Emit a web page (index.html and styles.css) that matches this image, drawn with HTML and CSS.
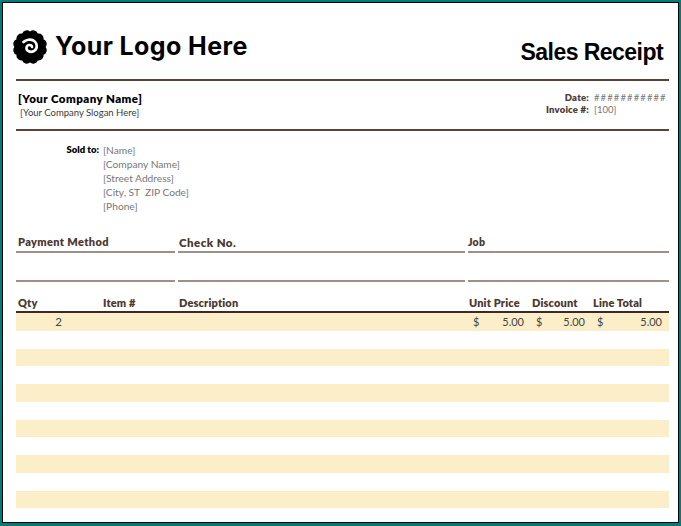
FILE: index.html
```html
<!DOCTYPE html>
<html lang="en">
<head>
<meta charset="utf-8">
<title>Sales Receipt</title>
<link rel="stylesheet" href="styles.css">
</head>
<body>
<main class="frame">
  <header class="top">
    <div class="logo">
      <svg class="mark" viewBox="0 0 36 36" aria-hidden="true">
        <path fill="#000" d="M33.600 18A5 5 0 0 1 31.500 25.800 5 5 0 0 1 25.800 31.500 5 5 0 0 1 18 33.600 5 5 0 0 1 10.200 31.500 5 5 0 0 1 4.500 25.800 5 5 0 0 1 2.400 18 5 5 0 0 1 4.500 10.200 5 5 0 0 1 10.200 4.500 5 5 0 0 1 18 2.400 5 5 0 0 1 25.800 4.500 5 5 0 0 1 31.500 10.200 5 5 0 0 1 33.600 18Z"/>
        <path fill="none" stroke="#fff" stroke-width="2.600" stroke-linecap="round" d="M20 18c-.2-2.500-4.800-2.800-5.500.5-.6 3.400 3.800 5.500 7.500 3.500 4-2.500 3.500-8-.5-10.500-3-1.500-7.500-1-10 1.500"/>
      </svg>
      <span class="logo-text">Your Logo Here</span>
    </div>
    <h1 class="title">Sales Receipt</h1>
  </header>

  <section class="company">
    <div>
      <div class="co-name">[Your Company Name]</div>
      <div class="co-slogan">[Your Company Slogan Here]</div>
    </div>
    <dl class="meta">
      <dt>Date:</dt><dd class="hash">###########</dd>
      <dt>Invoice #:</dt><dd>[100]</dd>
    </dl>
  </section>

  <section class="sold">
    <div class="sold-label">Sold to:</div>
    <div class="sold-lines">
      <div>[Name]</div>
      <div>[Company Name]</div>
      <div>[Street Address]</div>
      <div>[City, ST&nbsp; ZIP Code]</div>
      <div>[Phone]</div>
    </div>
  </section>

  <section class="fields">
    <div class="field pay">Payment Method</div>
    <div class="field check">Check No.</div>
    <div class="field job">Job</div>
    <div class="field"></div>
    <div class="field"></div>
    <div class="field"></div>
  </section>

  <section class="items">
    <div class="row head">
      <div>Qty</div><div>Item #</div><div>Description</div>
      <div>Unit Price</div><div>Discount</div><div>Line Total</div>
    </div>
    <div class="row band">
      <div class="qty">2</div><div></div><div></div>
      <div class="money"><span>$</span><span>5.00</span></div>
      <div class="money"><span>$</span><span>5.00</span></div>
      <div class="money"><span>$</span><span>5.00</span></div>
    </div>
    <div class="row"></div><div class="row band"></div>
    <div class="row"></div><div class="row band"></div>
    <div class="row"></div><div class="row band"></div>
    <div class="row"></div><div class="row band"></div>
    <div class="row"></div><div class="row band"></div>
  </section>
</main>
</body>
</html>
```
FILE: styles.css
```css
* { box-sizing: border-box; margin: 0; padding: 0; }
html, body { width: 681px; height: 526px; overflow: hidden; background: #fff; }
body { font-family: "Lato", "Liberation Sans", sans-serif; color: #000; }
.frame {
  width: 681px; height: 526px;
  border: 2px solid #027b7b;
  border-bottom-width: 3px;
  box-shadow: inset 0 0 0 1px #000;
  padding: 0 10px 0 14px;
  overflow: hidden;
}
.top {
  height: 79px; display: flex; justify-content: space-between; align-items: flex-start;
  border-bottom: 2px solid #5a4238;
}
.logo { display: flex; align-items: center; margin: 27px 0 0 -4px; gap: 7px; }
.mark { width: 36px; height: 36px; display: block; }
.logo-text { font-family: "Inter", sans-serif; font-weight: 700; font-size: 25px; letter-spacing: .4px; line-height: 30px; padding-bottom: 2px; }
.title { font-family: "Liberation Sans", sans-serif; font-size: 23px; font-weight: 700; line-height: 28px; margin: 36px 6px 0 0; letter-spacing: -.55px; }
.company {
  height: 50px; display: flex; justify-content: space-between; align-items: flex-start; padding: 11px 3px 0 2px;
  border-bottom: 2px solid #5a4238;
}
.co-name { font-size: 11.500px; font-weight: 800; letter-spacing: .45px; line-height: 14px; }
.co-slogan { font-size: 9.500px; color: #3a3a3a; line-height: 13px; padding-left: 2px; }
.meta { display: grid; grid-template-columns: auto 72px; column-gap: 5px; font-size: 9.500px; line-height: 12px; }
.meta dt { text-align: right; font-weight: 800; color: #4b3a32; letter-spacing: .2px; }
.meta dd { color: #777; }
.hash { letter-spacing: 1.1px; }
.sold { display: flex; padding-top: 12px; height: 98px; font-size: 10.200px; line-height: 14px; }
.sold-label { width: 83px; text-align: right; font-weight: 800; font-size: 9.500px; }
.sold-lines { margin-left: 4px; color: #777; }
.fields { display: grid; grid-template-columns: 159px 287px 1fr; grid-template-rows: 24px 29px; column-gap: 3px; }
.field { border-bottom: 2px solid #a08f86; font-weight: 800; color: #4b3a32; line-height: 15px; padding-top: 5px; }
.pay { font-size: 11px; letter-spacing: .35px; padding-left: 2px; }
.check { font-size: 11.500px; letter-spacing: .45px; padding-left: 1px; padding-top: 6px; }
.job { font-size: 10.500px; letter-spacing: .2px; padding-top: 6px; }
.items { margin-top: 13px; }
.row {
  display: grid; grid-template-columns: 85px 76px 290px 63px 61px 1fr;
  height: 17.750px; font-size: 11px; line-height: 18px;
}
.row.head { height: 18px; line-height: 16px; border-bottom: 2px solid #3e2a22; font-weight: 800; color: #4b3a32; letter-spacing: .15px; }
.row.head div { padding-left: 2px; }
.band { background: #fbeec9; color: #444; }
.qty { text-align: right; padding-right: 39px; font-size: 11.500px; }
.money { display: flex; justify-content: space-between; padding: 0 6px; }
.money:last-child { padding-right: 7px; }
```
